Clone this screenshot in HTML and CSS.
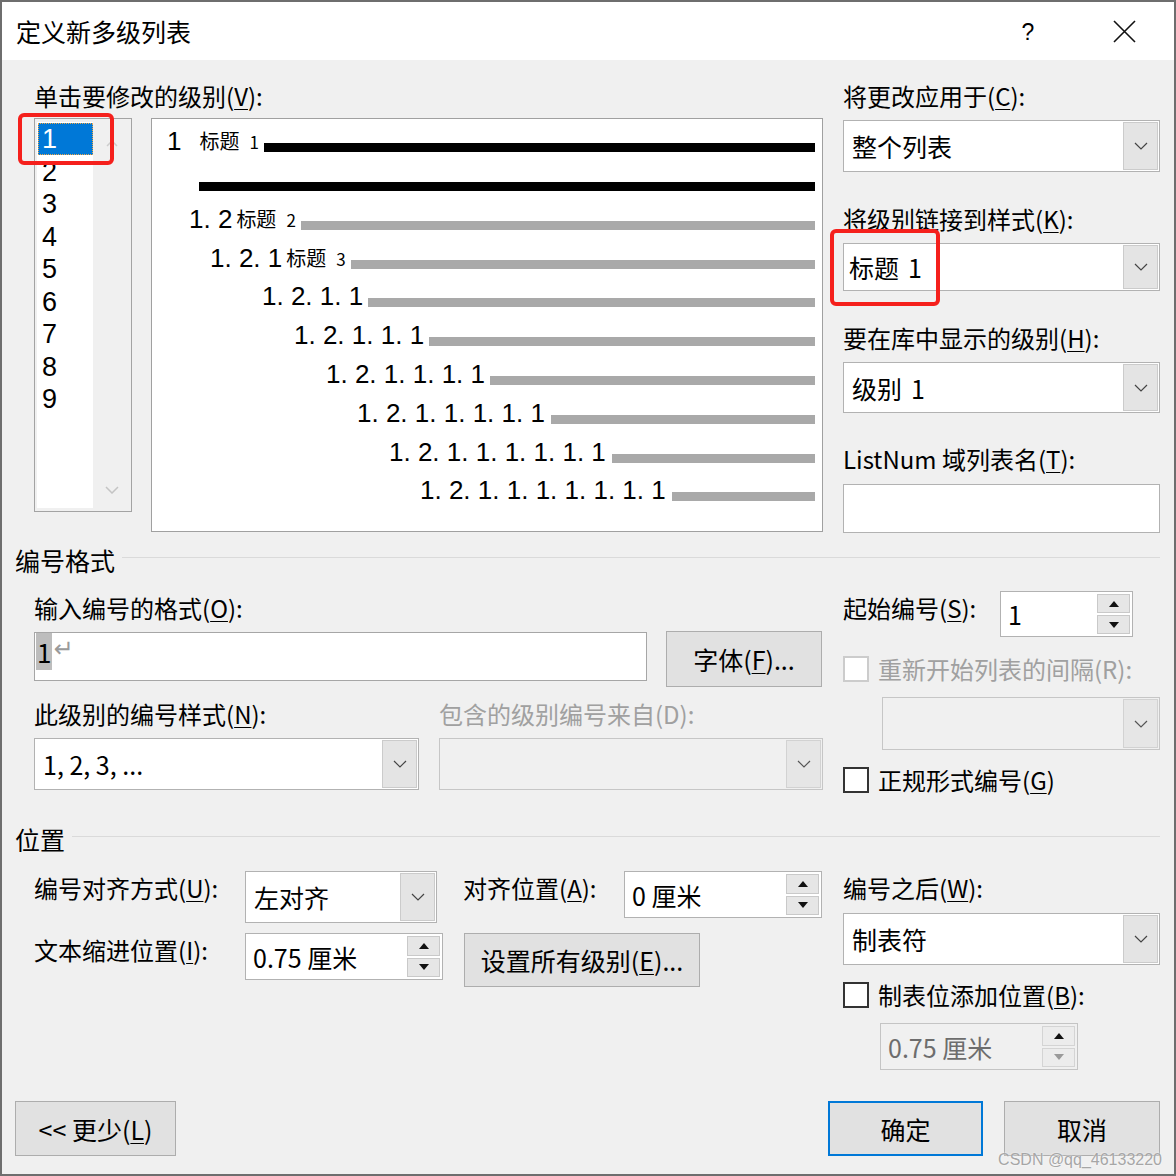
FILE: index.html
```html
<!DOCTYPE html>
<html lang="zh-CN">
<head>
<meta charset="utf-8">
<title>定义新多级列表</title>
<link rel="stylesheet" href="styles.css">
</head>
<body>
<div class="window">
  <div class="titlebar">
    <div class="title">定义新多级列表</div>
    <div class="tb-btn tb-help">?</div>
    <div class="tb-btn tb-close">
      <svg width="23" height="23" viewBox="0 0 23 23"><path d="M1 1L22 22M22 1L1 22" stroke="#111" stroke-width="1.6" fill="none"/></svg>
    </div>
  </div>

  <div class="main">
    <div class="grid2 top">
      <div class="col">
        <div class="label">单击要修改的级别(<u>V</u>):</div>
        <div class="tl-row">
          <div class="levels">
            <div class="items">
              <div class="item sel"><span class="selbox">1</span></div>
              <div class="item">2</div>
              <div class="item">3</div>
              <div class="item">4</div>
              <div class="item">5</div>
              <div class="item">6</div>
              <div class="item">7</div>
              <div class="item">8</div>
              <div class="item">9</div>
            </div>
            <div class="vscroll">
              <svg width="12" height="7" viewBox="0 0 12 7"><path d="M1 6L6 1L11 6" stroke="#cdcdcd" stroke-width="1.5" fill="none"/></svg>
              <svg width="14" height="8" viewBox="0 0 14 8"><path d="M1 1L7 7L13 1" stroke="#c4c4c4" stroke-width="1.5" fill="none"/></svg>
            </div>
          </div>
          <div class="preview">
            <div class="prow p1"><span class="num">1</span><span class="tag t1">标题<span class="tn">1</span></span><span class="bar black"></span></div>
            <div class="prow p2"><span class="bar black"></span></div>
            <div class="prow p3"><span class="num">1. 2</span><span class="tag">标题<span class="tn">2</span></span><span class="bar"></span></div>
            <div class="prow p4"><span class="num">1. 2. 1</span><span class="tag">标题<span class="tn">3</span></span><span class="bar"></span></div>
            <div class="prow p5"><span class="num">1. 2. 1. 1</span><span class="bar"></span></div>
            <div class="prow p6"><span class="num">1. 2. 1. 1. 1</span><span class="bar"></span></div>
            <div class="prow p7"><span class="num">1. 2. 1. 1. 1. 1</span><span class="bar"></span></div>
            <div class="prow p8"><span class="num">1. 2. 1. 1. 1. 1. 1</span><span class="bar b7"></span></div>
            <div class="prow p9"><span class="num">1. 2. 1. 1. 1. 1. 1. 1</span><span class="bar b7"></span></div>
            <div class="prow p10"><span class="num">1. 2. 1. 1. 1. 1. 1. 1. 1</span><span class="bar b8"></span></div>
          </div>
        </div>
      </div>

      <div class="col">
        <div class="label">将更改应用于(<u>C</u>):</div>
        <div class="combo h52 gap-s"><span class="val">整个列表</span><span class="dd"><svg width="14" height="8" viewBox="0 0 14 8"><path d="M1 1L7 7L13 1" stroke="#444" stroke-width="1.2" fill="none"/></svg></span></div>
        <div class="label gap-l">将级别链接到样式(<u>K</u>):</div>
        <div class="combo h48 gap-s"><span class="val v-tight">标题<span class="sp">1</span></span><span class="dd"><svg width="14" height="8" viewBox="0 0 14 8"><path d="M1 1L7 7L13 1" stroke="#444" stroke-width="1.2" fill="none"/></svg></span></div>
        <div class="label gap-l">要在库中显示的级别(<u>H</u>):</div>
        <div class="combo h51 gap-s"><span class="val">级别<span class="sp">1</span></span><span class="dd"><svg width="14" height="8" viewBox="0 0 14 8"><path d="M1 1L7 7L13 1" stroke="#444" stroke-width="1.2" fill="none"/></svg></span></div>
        <div class="label gap-l2">ListNum 域列表名(<u>T</u>):</div>
        <div class="textbox h49 gap-m"></div>
      </div>
    </div>

    <div class="sec sec1"><span>编号格式</span></div>

    <div class="grid2 fmt">
      <div class="col">
        <div class="label lab-in">输入编号的格式(<u>O</u>):</div>
        <div class="fmt-row">
          <div class="fmt-input"><span class="hl">1</span><span class="ret">↵</span></div>
          <div class="btn btn-font">字体(<u>F</u>)...</div>
        </div>
        <div class="pair-row labels-row">
          <div class="label">此级别的编号样式(<u>N</u>):</div>
          <div class="label disabled">包含的级别编号来自(D):</div>
        </div>
        <div class="pair-row combos-row">
          <div class="combo h52"><span class="val">1, 2, 3, ...</span><span class="dd"><svg width="14" height="8" viewBox="0 0 14 8"><path d="M1 1L7 7L13 1" stroke="#444" stroke-width="1.2" fill="none"/></svg></span></div>
          <div class="combo h52 dis"><span class="val"></span><span class="dd"><svg width="14" height="8" viewBox="0 0 14 8"><path d="M1 1L7 7L13 1" stroke="#555" stroke-width="1.2" fill="none"/></svg></span></div>
        </div>
      </div>
      <div class="col">
        <div class="start-row">
          <div class="label start-lab">起始编号(<u>S</u>):</div>
          <div class="spin w133 h46"><span class="val">1</span><span class="sbtns"><span class="sb"><i class="tri up"></i></span><span class="sb"><i class="tri down"></i></span></span></div>
        </div>
        <div class="cb-row cb-a"><span class="cb dis"></span><span class="label disabled">重新开始列表的间隔(R):</span></div>
        <div class="combo h53 dis combo-restart"><span class="val"></span><span class="dd"><svg width="14" height="8" viewBox="0 0 14 8"><path d="M1 1L7 7L13 1" stroke="#555" stroke-width="1.2" fill="none"/></svg></span></div>
        <div class="cb-row cb-b"><span class="cb"></span><span class="label">正规形式编号(<u>G</u>)</span></div>
      </div>
    </div>

    <div class="sec sec2"><span>位置</span></div>

    <div class="grid2 pos">
      <div class="col">
        <div class="pos-row">
          <div class="label plab">编号对齐方式(<u>U</u>):</div>
          <div class="combo h52 w192"><span class="val">左对齐</span><span class="dd"><svg width="14" height="8" viewBox="0 0 14 8"><path d="M1 1L7 7L13 1" stroke="#444" stroke-width="1.2" fill="none"/></svg></span></div>
          <div class="label plab2">对齐位置(<u>A</u>):</div>
          <div class="spin w198 h47"><span class="val">0 厘米</span><span class="sbtns"><span class="sb"><i class="tri up"></i></span><span class="sb"><i class="tri down"></i></span></span></div>
        </div>
        <div class="pos-row row2">
          <div class="label plab">文本缩进位置(<u>I</u>):</div>
          <div class="spin w198 h47"><span class="val">0.75 厘米</span><span class="sbtns"><span class="sb"><i class="tri up"></i></span><span class="sb"><i class="tri down"></i></span></span></div>
          <div class="btn btn-all">设置所有级别(<u>E</u>)...</div>
        </div>
      </div>
      <div class="col">
        <div class="label after-lab">编号之后(<u>W</u>):</div>
        <div class="combo h52 after-combo"><span class="val">制表符</span><span class="dd"><svg width="14" height="8" viewBox="0 0 14 8"><path d="M1 1L7 7L13 1" stroke="#444" stroke-width="1.2" fill="none"/></svg></span></div>
        <div class="cb-row cb-c"><span class="cb"></span><span class="label">制表位添加位置(<u>B</u>):</span></div>
        <div class="spin w198 h47 dis tab-spin"><span class="val">0.75 厘米</span><span class="sbtns"><span class="sb"><i class="tri up"></i></span><span class="sb"><i class="tri down grey"></i></span></span></div>
      </div>
    </div>

    <div class="footer">
      <div class="btn btn-less">&lt;&lt; 更少(<u>L</u>)</div>
      <div class="btn btn-ok">确定</div>
      <div class="btn btn-cancel">取消</div>
    </div>
  </div>

  <div class="redbox rb1"></div>
  <div class="redbox rb2"></div>
  <div class="watermark">CSDN @qq_46133220</div>
</div>
</body>
</html>
```

FILE: styles.css
```css
* { box-sizing: border-box; }
html, body { margin: 0; padding: 0; }
body {
  width: 1176px;
  height: 1176px;
  overflow: hidden;
  background: #f0f0f0;
  color: #000;
  font-family: "Noto Sans CJK SC", "Noto Sans", sans-serif;
}
u { text-decoration-thickness: 1px; text-underline-offset: 3px; }

.window {
  position: relative;
  width: 1176px;
  height: 1176px;
  border: 2px solid #6e6e6e;
  display: flex;
  flex-direction: column;
  background: #f0f0f0;
}

/* title bar */
.titlebar {
  flex: none;
  height: 58px;
  background: #fff;
  display: flex;
  align-items: center;
  padding: 0 27px 0 14px;
}
.title { flex: 1; font-size: 25px; line-height: 30px; }
.tb-btn { width: 46px; height: 40px; display: flex; align-items: center; justify-content: center; }
.tb-help { font-family: "Liberation Sans", sans-serif; font-size: 23px; margin-right: 50px; padding-top: 3px; }

/* main area */
.main {
  flex: 1;
  display: flex;
  flex-direction: column;
  padding: 21px 14px 18px 13px;
}
.label { font-size: 24px; line-height: 30px; height: 30px; white-space: nowrap; }
.label.disabled { color: #a0a0a0; }

.grid2 {
  display: grid;
  grid-template-columns: 789px 317px;
  column-gap: 20px;
  padding-left: 19px;
}
.col { display: flex; flex-direction: column; align-items: stretch; }

/* levels + preview */
.tl-row { display: flex; gap: 19px; margin-top: 7px; align-items: flex-start; }
.levels {
  width: 98px;
  height: 394px;
  border: 1px solid #a3a3a3;
  background: #f0f0f0;
  display: flex;
  padding: 3px 0 3px 2px;
}
.items { width: 56px; background: #fff; padding-top: 1px; }
.item {
  height: 32.5px;
  font-family: "Liberation Sans", "Noto Sans CJK SC", sans-serif;
  font-size: 27px;
  line-height: 32.5px;
  padding-left: 5px;
}
.item.sel { padding-left: 1px; }
.selbox {
  display: block;
  height: 32px;
  background: #0078d7;
  color: #fff;
  padding-left: 4px;
  outline: 1px dotted #f0a848;
  outline-offset: -1px;
}
.vscroll {
  flex: 1;
  display: flex;
  flex-direction: column;
  justify-content: space-between;
  align-items: center;
  padding: 18px 0 14px;
}

.preview {
  width: 672px;
  height: 414px;
  background: #fff;
  border: 1px solid #a0a0a0;
  padding-right: 7px;
}
.prow { display: flex; align-items: flex-end; height: 38.8px; }
.prow.p1 { height: 33px; padding-left: 15px; }
.prow.p2 { height: 39px; padding-left: 47px; }
.p3 { padding-left: 37px; }
.p4 { padding-left: 58px; }
.p5 { padding-left: 110px; }
.p6 { padding-left: 142px; }
.p7 { padding-left: 174px; }
.p8 { padding-left: 205px; }
.p9 { padding-left: 237px; }
.p10 { padding-left: 268px; }
.num {
  font-family: "Liberation Sans", "Noto Sans CJK SC", sans-serif;
  font-size: 26px;
  line-height: 22px;
  white-space: pre;
}
.tag { font-size: 20px; line-height: 20px; margin-left: 4px; white-space: nowrap; }
.tag.t1 { margin-left: 18px; }
.tn { font-size: 17px; margin-left: 10px; }
.bar { flex: 1; height: 9px; background: #a9a9a9; margin-left: 5px; }
.bar.black { background: #000; }
.p2 .bar { margin-left: 0; }
.bar.b7 { margin-left: 6px; }
.bar.b8 { margin-left: 6px; }

/* right column spacing */
.gap-s { margin-top: 9px; }
.gap-m { margin-top: 10px; }
.gap-l { margin-top: 32px; }
.gap-l2 { margin-top: 31px; }

/* combo */
.combo {
  display: flex;
  border: 1px solid #b2b2b2;
  background: #fff;
  padding: 1px;
}
.combo .val {
  flex: 1;
  display: flex;
  align-items: center;
  padding-left: 7px;
  font-size: 25px;
  white-space: nowrap;
}
.combo .val.v-tight { padding-left: 4px; }
.sp { margin-left: 9px; }
.combo .dd {
  width: 35px;
  background: #e4e4e4;
  border: 1px solid #cbcbcb;
  display: flex;
  align-items: center;
  justify-content: center;
}
.combo.dis { background: #f0f0f0; border-color: #c6c6c6; }
.combo.dis .dd { background: #e6e6e6; border-color: #d2d2d2; }
.h46 { height: 46px; }
.h47 { height: 47px; }
.h48 { height: 48px; }
.h49 { height: 49px; }
.h51 { height: 51px; }
.h52 { height: 52px; }
.h53 { height: 53px; }
.w133 { width: 133px; }
.w192 { width: 192px; }
.w198 { width: 198px; }

.textbox { background: #fff; border: 1px solid #b2b2b2; }

/* section headers */
.sec {
  display: flex;
  align-items: center;
  height: 30px;
  font-size: 25px;
  line-height: 30px;
}
.sec::after {
  content: "";
  flex: 1;
  height: 1px;
  background: #dadada;
  margin-left: 7px;
  margin-bottom: 6px;
}
.sec1 { margin-top: 12px; }
.sec2 { margin-top: 29px; }

/* numbering format */
.fmt { margin-top: 16px; }
.lab-in { margin-top: 2px; }
.fmt-row { display: flex; align-items: flex-start; gap: 19px; margin-top: 8px; }
.fmt-input {
  width: 613px;
  height: 49px;
  margin-top: 1px;
  background: #fff;
  border: 1px solid #a6a6a6;
  padding: 0 1px;
  display: flex;
  align-items: flex-start;
}
.hl {
  display: inline-block;
  height: 37px;
  line-height: 37px;
  font-size: 26px;
  background: #bdbdbd;
  padding: 0 1px;
}
.ret {
  font-family: "DejaVu Sans", sans-serif;
  font-size: 24px;
  color: #9a9a9a;
  line-height: 28px;
  margin-top: 2px;
  margin-left: 1px;
}

.btn {
  display: flex;
  align-items: center;
  justify-content: center;
  background: #e1e1e1;
  border: 1px solid #adadad;
  font-size: 25px;
  white-space: nowrap;
}
.btn-font { width: 156px; height: 56px; }

.pair-row { display: grid; grid-template-columns: 385px 384px; column-gap: 20px; }
.labels-row { margin-top: 12px; }
.combos-row { margin-top: 9px; }

.start-row { display: flex; align-items: flex-start; }
.start-lab { width: 157px; margin-top: 2px; }

.spin {
  display: flex;
  background: #fff;
  border: 1px solid #b2b2b2;
  padding: 2px;
}
.spin .val {
  flex: 1;
  display: flex;
  align-items: center;
  padding-left: 5px;
  font-size: 25px;
  white-space: nowrap;
}
.sbtns { width: 33px; display: flex; flex-direction: column; gap: 2px; }
.sb {
  flex: 1;
  background: #e6e6e6;
  border: 1px solid #c9c9c9;
  display: flex;
  align-items: center;
  justify-content: center;
}
.tri { display: block; width: 0; height: 0; border-left: 5px solid transparent; border-right: 5px solid transparent; }
.tri.up { border-bottom: 6px solid #111; }
.tri.down { border-top: 6px solid #111; }
.tri.down.grey { border-top-color: #9a9a9a; }
.spin.dis { background: #f0f0f0; border-color: #c4c4c4; }
.spin.dis .val { color: #6d6d6d; }
.spin.dis .sb { background: #ececec; border-color: #d4d4d4; }

.cb-row { display: flex; align-items: center; gap: 9px; height: 30px; }
.cb {
  flex: none;
  width: 26px;
  height: 26px;
  border: 2px solid #333;
  background: #fff;
}
.cb.dis { border-color: #cccccc; }
.cb-a { margin-top: 17px; }
.combo-restart { margin-top: 13px; margin-left: 39px; }
.cb-b { margin-top: 15px; }

/* position */
.pos { margin-top: 17px; }
.pos-row { display: flex; align-items: flex-start; }
.pos-row.row2 { margin-top: 10px; }
.plab { width: 211px; margin-top: 2px; }
.plab2 { width: 161px; margin-left: 26px; margin-top: 2px; }
.btn-all { width: 236px; height: 54px; margin-left: 21px; }
.after-lab { margin-top: 2px; }
.after-combo { margin-top: 10px; }
.cb-c { margin-top: 15px; }
.tab-spin { margin-top: 13px; margin-left: 37px; }

/* footer */
.footer { margin-top: auto; display: flex; align-items: flex-start; }
.footer .btn { height: 55px; }
.btn-less { width: 161px; margin-right: auto; }
.btn-ok { width: 155px; border: 2px solid #0078d7; }
.btn-cancel { width: 156px; margin-left: 21px; }

/* overlays */
.redbox {
  position: absolute;
  border: 4px solid #f5201c;
  border-radius: 6px;
}
.rb1 { left: 16px; top: 111px; width: 96px; height: 52px; }
.rb2 { left: 828px; top: 227px; width: 110px; height: 77px; }
.watermark {
  position: absolute;
  right: 12px;
  bottom: 4px;
  font-family: "Liberation Sans", sans-serif;
  font-size: 16px;
  line-height: 20px;
  color: #a6a6a6;
  text-shadow: 0 0 2px #fff;
}
```
